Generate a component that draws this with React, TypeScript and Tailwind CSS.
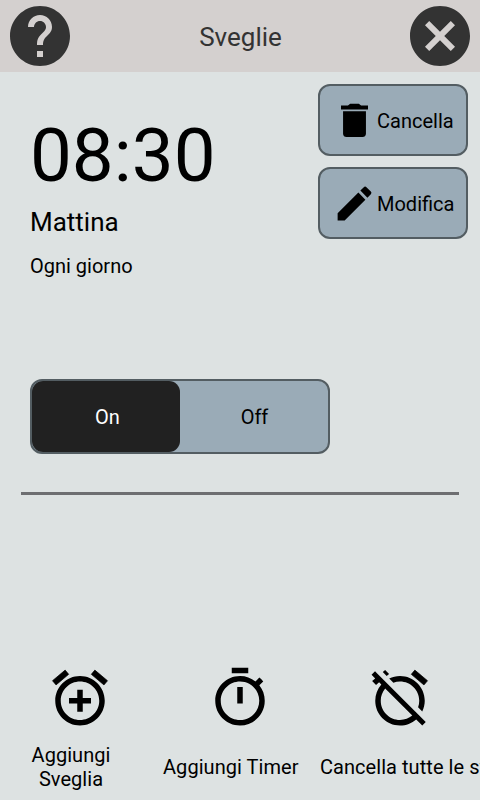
import type { ReactNode } from "react";

const HELP =
  "M12 2C6.48 2 2 6.48 2 12s4.48 10 10 10 10-4.48 10-10S17.52 2 12 2zm1 17h-2v-2h2v2zm2.07-7.75l-.9.92C13.45 12.9 13 13.5 13 15h-2v-.5c0-1.1.45-2.1 1.17-2.83l1.24-1.26c.37-.36.59-.86.59-1.41 0-1.1-.9-2-2-2s-2 .9-2 2H8c0-2.21 1.79-4 4-4s4 1.79 4 4c0 .88-.36 1.68-.93 2.25z";
const CANCEL =
  "M12 2C6.47 2 2 6.47 2 12s4.47 10 10 10 10-4.47 10-10S17.53 2 12 2zm5 13.59L15.59 17 12 13.41 8.41 17 7 15.59 10.59 12 7 8.41 8.41 7 12 10.59 15.59 7 17 8.41 13.41 12 17 15.59z";
const TRASH = "M5.9 19c0 1 .8 1.8 1.8 1.8h8.6c1 0 1.8-.8 1.8-1.8V7.1H5.9V19zM19.2 4h-3.7l-1.2-1H9.7L8.5 4H4.8v2.1h14.4V4z";
const PENCIL =
  "M3 17.25V21h3.75L17.81 9.94l-3.75-3.75L3 17.25zM20.71 7.04c.39-.39.39-1.02 0-1.41l-2.34-2.34c-.39-.39-1.02-.39-1.41 0l-1.83 1.83 3.75 3.75 1.83-1.83z";
const BELL_LEFT = "M7.88 3.39L6.6 1.86 2 5.71l1.29 1.53 4.59-3.85z";
const BELL_RIGHT = "M22 5.72l-4.6-3.86-1.29 1.53 4.6 3.86L22 5.72z";
const ALARM_ADD =
  "M12 4c-4.97 0-9 4.03-9 9s4.02 9 9 9c4.97 0 9-4.03 9-9s-4.03-9-9-9zm0 16c-3.87 0-7-3.13-7-7s3.13-7 7-7 7 3.13 7 7-3.13 7-7 7zm1-11h-2v3H8v2h3v3h2v-3h3v-2h-3V9z";
const TIMER =
  "M15 1H9v2h6V1zm-4 13h2V8h-2v6zm8.03-6.61l1.42-1.42c-.43-.51-.9-.99-1.41-1.41l-1.42 1.42C16.07 4.74 14.12 4 12 4c-4.97 0-9 4.03-9 9s4.02 9 9 9 9-4.03 9-9c0-2.12-.74-4.07-1.97-5.61zM12 20c-3.87 0-7-3.13-7-7s3.13-7 7-7 7 3.13 7 7-3.13 7-7 7z";
const ALARM_OFF =
  "M12 6c3.87 0 7 3.13 7 7 0 .84-.16 1.65-.43 2.4l1.52 1.52c.58-1.19.91-2.51.91-3.92 0-4.97-4.03-9-9-9-1.41 0-2.73.33-3.92.91L9.6 6.43C10.35 6.16 11.16 6 12 6zM2.92 2.29L1.65 3.57 2.98 4.9l-1.11.93 1.42 1.42 1.11-.94.8.8C3.83 8.69 3 10.75 3 13c0 4.97 4.02 9 9 9 2.25 0 4.31-.83 5.89-2.2l2.2 2.2 1.27-1.27L3.89 3.27l-.97-.98zm13.55 16.1C15.26 19.39 13.7 20 12 20c-3.87 0-7-3.13-7-7 0-1.7.61-3.26 1.61-4.47l9.86 9.86zM8.02 3.28L6.6 1.86l-.86.71 1.42 1.42.86-.71z";

function Icon({ d, bells, className }: { d: string; bells?: string; className: string }) {
  return (
    <svg viewBox="0 0 24 24" fill="currentColor" className={`shrink-0 ${className}`}>
      <path d={d} />
      {bells && <path d={bells} stroke="currentColor" strokeWidth="0.25" strokeLinejoin="round" />}
    </svg>
  );
}

function ActionButton({ icon, label }: { icon: string; label: string }) {
  return (
    <button className="flex h-[72px] w-[150px] items-center rounded-xl border-2 border-[#535d62] bg-[#9aabb7] pl-3">
      <Icon d={icon} className="size-[45px]" />
      <span className="whitespace-nowrap pt-px text-[20px]">{label}</span>
    </button>
  );
}

function BottomAction({ icon, bells, children }: { icon: string; bells?: string; children: ReactNode }) {
  return (
    <button className="flex w-40 shrink-0 flex-col items-center">
      <Icon d={icon} bells={bells} className="size-[66px]" />
      <span className="flex h-[71px] w-full items-center text-[20px] leading-6 tracking-[0.05px]">{children}</span>
    </button>
  );
}

export default function App() {
  return (
    <div className="flex h-[800px] w-[480px] flex-col overflow-hidden bg-[#dde2e2] font-[Roboto,sans-serif] text-black">
      <header className="flex h-[72px] shrink-0 items-center justify-between bg-[#d4d0cf] px-1 text-[#333]">
        <Icon d={HELP} className="size-[72px]" />
        <h1 className="pl-px pt-0.5 text-[26px]">Sveglie</h1>
        <Icon d={CANCEL} className="size-[72px]" />
      </header>

      <main className="flex h-[307px] shrink-0 justify-between pl-[30px] pr-3 pt-3">
        <div className="flex flex-col items-start">
          <div className="mt-[28px] h-[88px] text-[74.5px] leading-[88px]">08:30</div>
          <div className="mt-[7px] text-[26px] leading-[30px]">Mattina</div>
          <div className="mt-[17px] text-[20px] leading-6">Ogni giorno</div>
        </div>
        <div className="flex flex-col gap-[11px]">
          <ActionButton icon={TRASH} label="Cancella" />
          <ActionButton icon={PENCIL} label="Modifica" />
        </div>
      </main>

      <div className="ml-[30px] flex h-[75px] w-[300px] shrink-0 rounded-xl border-2 border-[#535d62] bg-[#9aabb7] text-[20px]">
        <button className="flex w-[148px] items-center justify-center rounded-[11px] bg-[#212121] pl-[3px] text-white">On</button>
        <button className="flex flex-1 items-center justify-center pl-px">Off</button>
      </div>

      <hr className="mx-[21px] mt-[38px] h-[3px] shrink-0 border-0 bg-[#6d6e71]" />

      <nav className="mt-[170px] flex shrink-0">
        <BottomAction icon={ALARM_ADD} bells={BELL_LEFT + BELL_RIGHT}>
          <span className="w-[142px] text-center">
            Aggiungi
            <br />
            Sveglia
          </span>
        </BottomAction>
        <BottomAction icon={TIMER}>
          <span className="whitespace-nowrap pl-[3px]">Aggiungi Timer</span>
        </BottomAction>
        <BottomAction icon={ALARM_OFF} bells={BELL_RIGHT}>
          <span className="whitespace-nowrap">Cancella tutte le sveglie</span>
        </BottomAction>
      </nav>
    </div>
  );
}
